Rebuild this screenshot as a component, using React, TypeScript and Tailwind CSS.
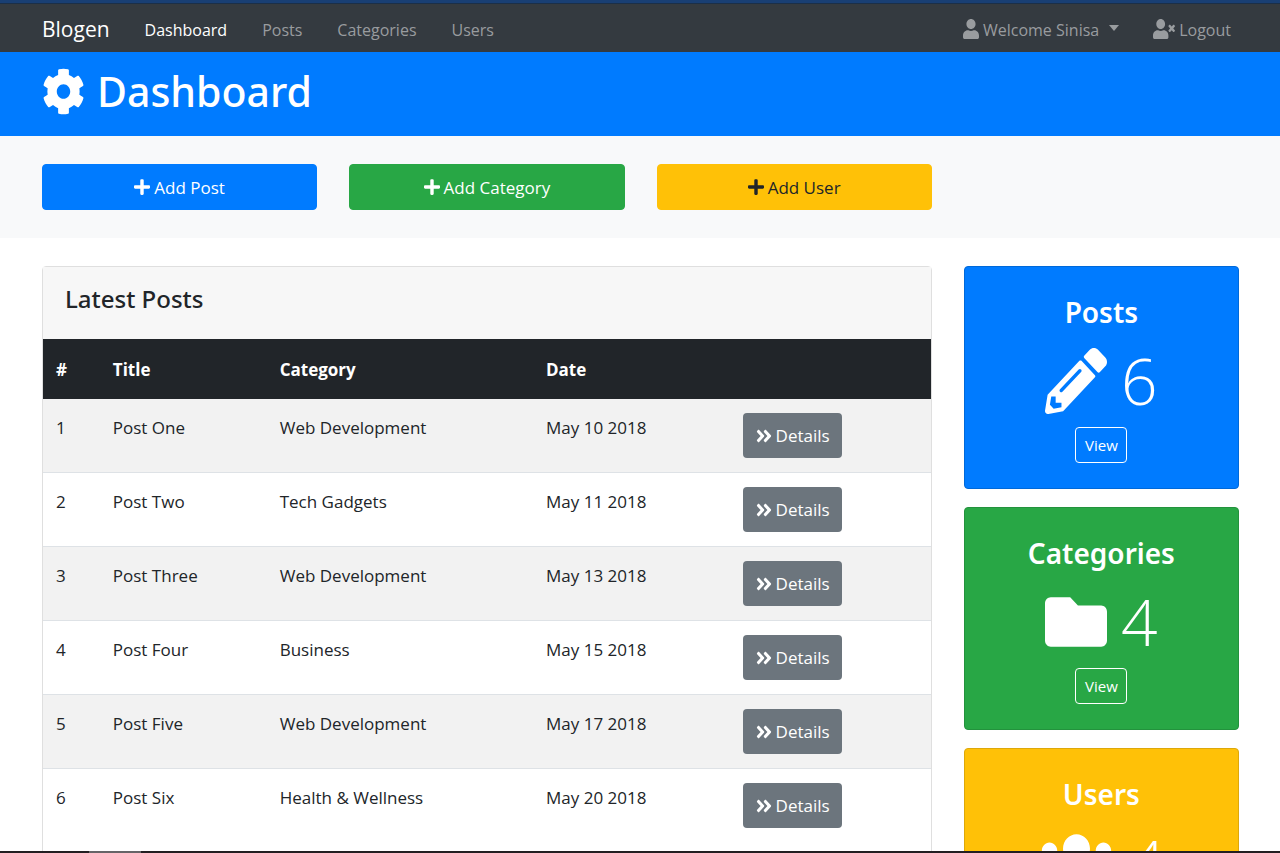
import type { ComponentType, SVGProps } from "react";
import {
  FaAngleDoubleRight,
  FaCog,
  FaFolder,
  FaPencilAlt,
  FaPlus,
  FaUser,
  FaUsers,
  FaUserTimes,
} from "react-icons/fa";

type Icon = ComponentType<SVGProps<SVGSVGElement>>;

const container = "pl-[42px] pr-[41px]";
const headingFont = "font-['Noto_Sans','Open_Sans',sans-serif]";

const navLinks = ["Dashboard", "Posts", "Categories", "Users"];

const actions = [
  { label: "Add Post", style: "border-[#007bff] bg-[#007bff] text-white" },
  { label: "Add Category", style: "border-[#28a745] bg-[#28a745] text-white" },
  { label: "Add User", style: "border-[#ffc107] bg-[#ffc107] text-[#212529]" },
];

const posts = [
  { title: "Post One", category: "Web Development", date: "May 10 2018" },
  { title: "Post Two", category: "Tech Gadgets", date: "May 11 2018" },
  { title: "Post Three", category: "Web Development", date: "May 13 2018" },
  { title: "Post Four", category: "Business", date: "May 15 2018" },
  { title: "Post Five", category: "Web Development", date: "May 17 2018" },
  { title: "Post Six", category: "Health & Wellness", date: "May 20 2018" },
];

const stats: { title: string; count: number; icon: Icon; size: string; style: string }[] = [
  { title: "Posts", count: 6, icon: FaPencilAlt as Icon, size: "h-[66px] w-[62px]", style: "border-[#0069d9] bg-[#007bff]" },
  { title: "Categories", count: 4, icon: FaFolder as Icon, size: "h-[66px] w-[62px]", style: "border-[#23923d] bg-[#28a745]" },
  { title: "Users", count: 4, icon: FaUsers as Icon, size: "h-[66px] w-[77px]", style: "border-[#dda80a] bg-[#ffc107]" },
];

function Navbar() {
  return (
    <nav className={`flex h-12 shrink-0 items-center bg-[#343a40] pt-1 text-base ${container}`}>
      <a href="#" className="mr-[35px] text-[21px] text-white">
        Blogen
      </a>
      <ul className="flex gap-[35px]">
        {navLinks.map((link, i) => (
          <li key={link}>
            <a href="#" className={i === 0 ? "text-white" : "text-[#999c9f]"}>
              {link}
            </a>
          </li>
        ))}
      </ul>
      <ul className="mr-2 ml-auto flex gap-[34px] text-[#999c9f]">
        <li>
          <button type="button" className="flex items-center gap-1">
            <FaUser preserveAspectRatio="none" className="mb-0.5 h-5 w-4" />
            Welcome Sinisa
            <svg viewBox="0 0 10 6" className="mb-1 ml-1.5 h-1.5 w-2.5" fill="currentColor">
              <path d="M0 0h10L5 6z" />
            </svg>
          </button>
        </li>
        <li>
          <a href="#" className="flex items-center gap-1">
            <FaUserTimes preserveAspectRatio="none" className="mb-0.5 h-5 w-[22px]" />
            Logout
          </a>
        </li>
      </ul>
    </nav>
  );
}

function PostsTable() {
  return (
    <div className="col-span-3 rounded border border-[#dfdfdf]">
      <div className="bg-[#f7f7f7] px-[22px] pt-[14px] pb-[22px]">
        <h4 className={`text-2xl leading-9 font-medium ${headingFont}`}>Latest Posts</h4>
      </div>
      <table className="w-full table-fixed text-left">
        <thead className="bg-[#212529] text-white">
          <tr className="h-[60px]">
            <th className="w-[6.4%] px-[13px] pt-0.5 font-bold">#</th>
            <th className="w-[18.8%] px-[13px] pt-0.5 font-bold">Title</th>
            <th className="w-[30%] px-[13px] pt-0.5 font-bold">Category</th>
            <th className="w-[22.2%] px-[13px] pt-0.5 font-bold">Date</th>
            <th className="px-[13px]" aria-label="Actions" />
          </tr>
        </thead>
        <tbody>
          {posts.map((post, i) => (
            <tr
              key={post.title}
              className="border-b border-[#dee2e6] align-top last:border-b-0 odd:bg-[#f2f2f2]"
            >
              <td className="px-[13px] pt-4">{i + 1}</td>
              <td className="px-[13px] pt-4">{post.title}</td>
              <td className="px-[13px] pt-4">{post.category}</td>
              <td className="px-[13px] pt-4">{post.date}</td>
              <td className="px-[13px] pt-[14px] pb-[14px]">
                <a
                  href="#"
                  className="flex h-[45px] w-[99px] items-center justify-center gap-1 rounded bg-[#6c757d] text-white"
                >
                  <FaAngleDoubleRight preserveAspectRatio="none" className="h-5 w-4" />
                  Details
                </a>
              </td>
            </tr>
          ))}
        </tbody>
      </table>
    </div>
  );
}

export default function App() {
  return (
    <div className="flex h-screen flex-col overflow-hidden bg-white font-['Open_Sans','Noto_Sans',sans-serif] text-[17px] leading-[26px] text-[#212529]">
      <div className="h-1 shrink-0 border-b border-[#1b2f48] bg-[#193f74]" />
      <Navbar />
      <div className="min-h-0 flex-1 overflow-hidden">
        <header className={`flex h-[84px] items-center bg-[#007bff] pb-1.5 text-white ${container}`}>
          <h1 className={`flex items-center gap-3 text-[41px] leading-[52px] font-medium ${headingFont}`}>
            <FaCog preserveAspectRatio="none" className="h-[47px] w-[43px]" />
            Dashboard
          </h1>
        </header>
        <section className={`grid grid-cols-4 gap-8 bg-[#f8f9fa] py-7 ${container}`}>
          {actions.map((action) => (
            <a
              key={action.label}
              href="#"
              className={`flex h-[46px] items-center justify-center gap-1 rounded border pt-0.5 ${action.style}`}
            >
              <FaPlus preserveAspectRatio="none" className="mb-0.5 h-[18px] w-4" />
              {action.label}
            </a>
          ))}
        </section>
        <main className={`grid grid-cols-4 gap-8 pt-7 ${container}`}>
          <PostsTable />
          <aside className="flex flex-col gap-[18px]">
            {stats.map(({ title, count, icon: StatIcon, size, style }) => (
              <section
                key={title}
                className={`flex h-[223px] flex-col items-center rounded border pt-[22px] text-white ${style}`}
              >
                <h3 className={`text-[28px] leading-[46px] font-semibold ${headingFont}`}>{title}</h3>
                <div className="flex h-[88px] items-center gap-[14px]">
                  <StatIcon preserveAspectRatio="none" className={`mt-1 ${size}`} />
                  <span className="pt-1 text-[64px] leading-[80px] font-light">{count}</span>
                </div>
                <a
                  href="#"
                  className="mt-1 flex h-9 w-[52px] items-center justify-center rounded border border-white text-[15px]"
                >
                  View
                </a>
              </section>
            ))}
          </aside>
        </main>
      </div>
      <div className="flex h-0.5 shrink-0 bg-[#231f22] pl-[89px]">
        <div className="w-[52px] bg-[#666467]" />
      </div>
    </div>
  );
}
